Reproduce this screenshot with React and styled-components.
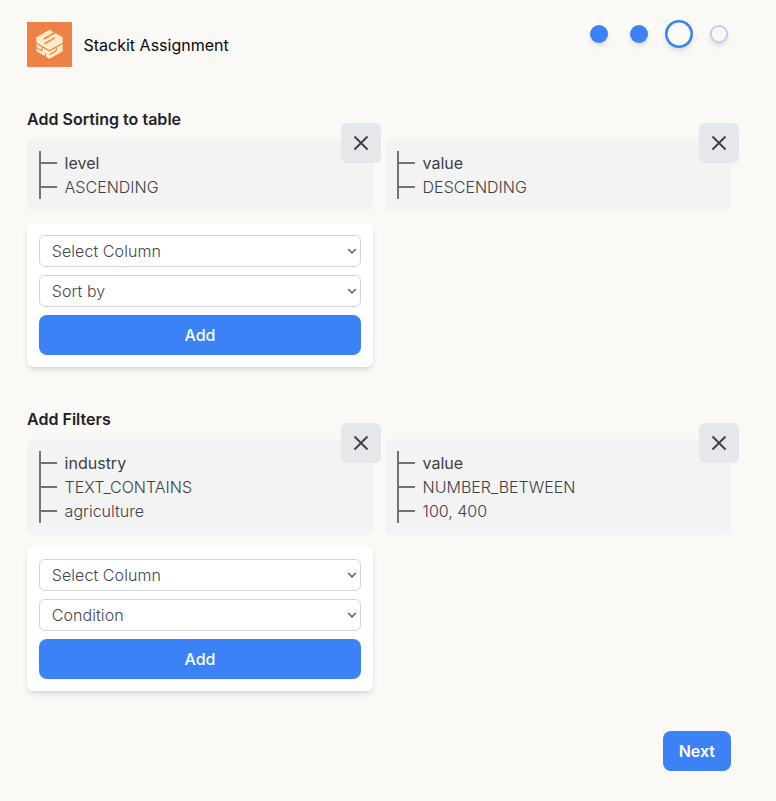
import React from "react";
import styled, { createGlobalStyle } from "styled-components";

const GlobalStyle = createGlobalStyle`
  *, *::before, *::after { box-sizing: border-box; }
  body {
    margin: 0;
    background: #faf9f6;
    color: #222226;
    font-family: Inter, "Liberation Sans", sans-serif;
    font-size: 16px;
    line-height: 24px;
  }
  button, select { font: inherit; margin: 0; }
`;

const Page = styled.main`
  display: flex;
  flex-direction: column;
  gap: 40px;
  min-height: 801px;
  padding: 22px 45px 30px 27px;
`;

const Header = styled.header`
  display: flex;
  justify-content: space-between;
  align-items: flex-start;
  height: 45px;
`;

const Brand = styled.div`
  display: flex;
  align-items: center;
  gap: 11.5px;
  color: #09090b;
  height: 45px;
`;

const LogoSvg = styled.svg`
  display: block;
  width: 45px;
  height: 45px;
`;

const Steps = styled.ol`
  display: grid;
  grid-template-columns: repeat(4, 40px);
  grid-template-rows: 24px;
  place-items: center;
  margin: 0 -8px 0 0;
  padding: 0;
  list-style: none;
`;

const stepLooks = {
  done: "background: #3b82f6;",
  current: "--ring: inset 0 0 0 2.6px #3b82f6; width: 28px; height: 28px;",
  upcoming: "--ring: inset 0 0 0 1.7px #b1cdfa;",
};

const Step = styled.li`
  --ring: inset 0 0 0 0 transparent;
  width: 18px;
  height: 18px;
  border-radius: 50%;
  background: #faf9f6;
  box-shadow: var(--ring), 0 4px 6px -1px rgb(0 0 0 / 0.1), 0 2px 4px -2px rgb(0 0 0 / 0.1);
  ${(p) => stepLooks[p.$state]}
`;

const SectionBox = styled.section`
  display: flex;
  flex-direction: column;
`;

const Title = styled.h2`
  margin: 0 0 8px;
  font-size: 16px;
  line-height: 24px;
  font-weight: 600;
  letter-spacing: 0.02px;
`;

const Grid = styled.div`
  display: grid;
  grid-template-columns: 1fr 1fr;
  gap: 12px;
`;

const RuleCard = styled.article`
  position: relative;
  padding: 12px;
  border-radius: 6px;
  background: #f3f3f3;
`;

const RuleLines = styled.ul`
  margin: 0;
  padding: 0;
  list-style: none;
  border-left: 2px solid #71717a;
`;

const RuleLine = styled.li`
  display: flex;
  align-items: center;
  gap: 7.6px;
  height: 24px;
  color: #3f3f46;
  font-weight: ${(p) => (p.$strong ? 400 : 300)};

  &::before {
    content: "";
    width: 16px;
    height: 2px;
    background: #71717a;
  }
`;

const CloseButton = styled.button`
  position: absolute;
  top: -16px;
  right: -8px;
  display: grid;
  place-items: center;
  width: 40px;
  height: 40px;
  padding: 0;
  border: 0;
  border-radius: 6px;
  background: #e5e7eb;
  color: #3f3f46;
`;

const Form = styled.form`
  display: flex;
  flex-direction: column;
  gap: 8px;
  padding: 12px;
  border-radius: 6px;
  background: #fff;
  box-shadow: 0 4px 6px -1px rgb(0 0 0 / 0.1), 0 2px 4px -2px rgb(0 0 0 / 0.1);
`;

const SelectWrap = styled.div`
  display: grid;
  align-items: center;

  > * {
    grid-area: 1 / 1;
  }
`;

const Select = styled.select`
  appearance: none;
  width: 100%;
  height: 32px;
  padding: 0 24px 0 11.7px;
  border: 1px solid #d1d5db;
  border-radius: 6px;
  background-color: #fff;
  color: #45454d;
  font-weight: 300;
  letter-spacing: 0.08px;
`;

const Chevron = styled.svg`
  justify-self: end;
  margin-right: 4px;
  pointer-events: none;
`;

const Button = styled.button`
  height: 40px;
  padding: 0 16px;
  border: 0;
  border-radius: 8px;
  background: #3b82f6;
  color: #fff;
  font-weight: ${(p) => (p.$strong ? 600 : 500)};
`;

const Footer = styled.footer`
  display: flex;
  justify-content: flex-end;
`;

const Logo = () => (
  <LogoSvg viewBox="0 0 45 45" aria-hidden="true">
    <rect width="45" height="45" fill="#ee8145" />
    <path
      d="M22.5 7.8 35.6 15.3v13.9L22.5 36.8 9.4 29.2V15.3z"
      fill="#ffeccb"
    />
    <path
      d="M9 21 22.5 28.8 36 21M9 25.4l6 3.4M18.4 31v4M15 24.6v4.2M22.5 32.8l6.6-3.8M29.2 25v4"
      fill="none"
      stroke="#ee8145"
      strokeWidth="1.1"
    />
    <path
      d="M17 17 29 10M17.4 21.8 28 15.6"
      fill="none"
      stroke="#ee8145"
      strokeWidth="1.5"
    />
  </LogoSvg>
);

const CloseIcon = () => (
  <svg width="16" height="16" viewBox="0 0 16 16" aria-hidden="true">
    <path d="M1.5 1.5l13 13M14.5 1.5l-13 13" stroke="currentColor" strokeWidth="1.9" />
  </svg>
);

const steps = ["done", "done", "current", "upcoming"];

const sections = [
  {
    title: "Add Sorting to table",
    rules: [
      ["level", "ASCENDING"],
      ["value", "DESCENDING"],
    ],
    fields: ["Select Column", "Sort by"],
  },
  {
    title: "Add Filters",
    rules: [
      ["industry", "TEXT_CONTAINS", "agriculture"],
      ["value", "NUMBER_BETWEEN", "100, 400"],
    ],
    fields: ["Select Column", "Condition"],
  },
];

const Rule = ({ lines }) => (
  <RuleCard>
    <RuleLines>
      {lines.map((line, i) => (
        <RuleLine key={line} $strong={i === 0}>
          {line}
        </RuleLine>
      ))}
    </RuleLines>
    <CloseButton type="button" aria-label="Remove">
      <CloseIcon />
    </CloseButton>
  </RuleCard>
);

const Field = ({ label }) => (
  <SelectWrap>
    <Select aria-label={label}>
      <option>{label}</option>
    </Select>
    <Chevron width="10" height="8" viewBox="0 0 10 8" aria-hidden="true">
      <path d="M1.2 2 5 5.8 8.8 2" fill="none" stroke="#666" strokeWidth="1.6" />
    </Chevron>
  </SelectWrap>
);

const Section = ({ title, rules, fields }) => (
  <SectionBox>
    <Title>{title}</Title>
    <Grid>
      {rules.map((lines) => (
        <Rule key={lines[0]} lines={lines} />
      ))}
      <Form>
        {fields.map((label) => (
          <Field key={label} label={label} />
        ))}
        <Button type="button">Add</Button>
      </Form>
    </Grid>
  </SectionBox>
);

export default function App() {
  return (
    <>
      <GlobalStyle />
      <Page>
        <Header>
          <Brand>
            <Logo />
            Stackit Assignment
          </Brand>
          <Steps>
            {steps.map((state, i) => (
              <Step key={i} $state={state} />
            ))}
          </Steps>
        </Header>
        {sections.map((section) => (
          <Section key={section.title} {...section} />
        ))}
        <Footer>
          <Button type="button" $strong>
            Next
          </Button>
        </Footer>
      </Page>
    </>
  );
}
